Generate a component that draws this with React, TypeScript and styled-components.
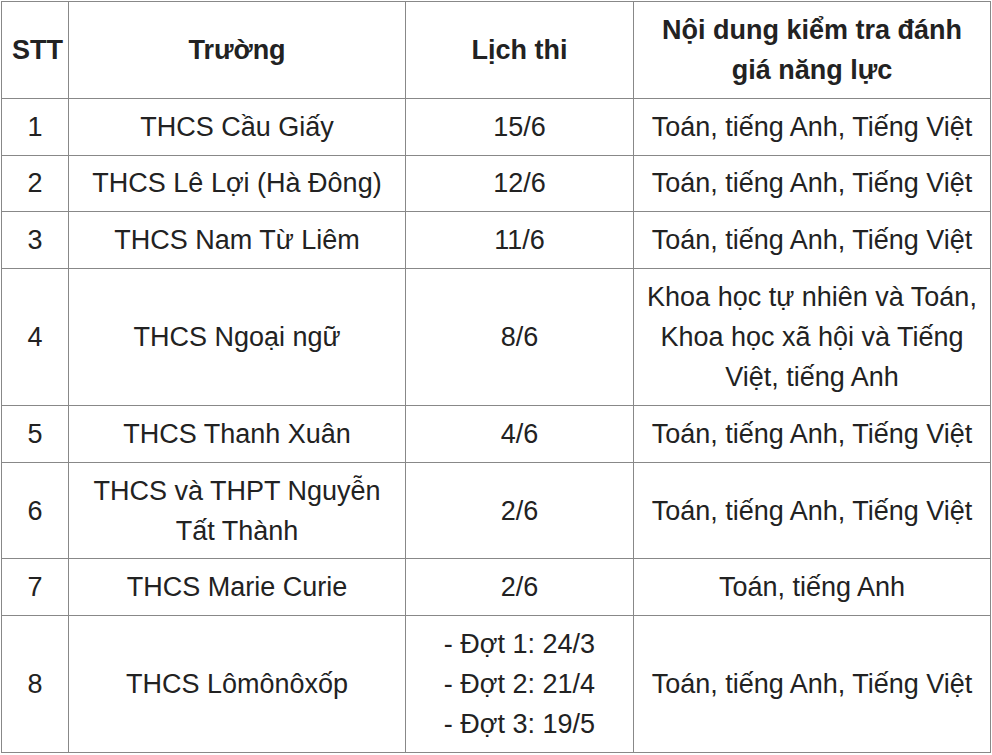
import React from "react";
import styled, { createGlobalStyle } from "styled-components";

type Row = {
  stt: string;
  school: string;
  dates: string[];
  content: string;
};

const rows: Row[] = [
  { stt: "1", school: "THCS Cầu Giấy", dates: ["15/6"], content: "Toán, tiếng Anh, Tiếng Việt" },
  { stt: "2", school: "THCS Lê Lợi (Hà Đông)", dates: ["12/6"], content: "Toán, tiếng Anh, Tiếng Việt" },
  { stt: "3", school: "THCS Nam Từ Liêm", dates: ["11/6"], content: "Toán, tiếng Anh, Tiếng Việt" },
  {
    stt: "4",
    school: "THCS Ngoại ngữ",
    dates: ["8/6"],
    content: "Khoa học tự nhiên và Toán, Khoa học xã hội và Tiếng Việt, tiếng Anh",
  },
  { stt: "5", school: "THCS Thanh Xuân", dates: ["4/6"], content: "Toán, tiếng Anh, Tiếng Việt" },
  { stt: "6", school: "THCS và THPT Nguyễn Tất Thành", dates: ["2/6"], content: "Toán, tiếng Anh, Tiếng Việt" },
  { stt: "7", school: "THCS Marie Curie", dates: ["2/6"], content: "Toán, tiếng Anh" },
  {
    stt: "8",
    school: "THCS Lômônôxốp",
    dates: ["- Đợt 1: 24/3", "- Đợt 2: 21/4", "- Đợt 3: 19/5"],
    content: "Toán, tiếng Anh, Tiếng Việt",
  },
];

const App = () => {
  return (
    <>
      <GlobalStyle />
      <Table>
        <colgroup>
          <col style={{ width: 67 }} />
          <col style={{ width: 337 }} />
          <col style={{ width: 228 }} />
          <col style={{ width: 357 }} />
        </colgroup>
        <thead>
          <tr>
            <Th>STT</Th>
            <Th>Trường</Th>
            <Th>Lịch thi</Th>
            <Th>Nội dung kiểm tra đánh giá năng lực</Th>
          </tr>
        </thead>
        <tbody>
          {rows.map((row) => (
            <tr key={row.stt}>
              <Td>{row.stt}</Td>
              <Td>{row.school}</Td>
              <Td>
                {row.dates.map((d, i) => (
                  <React.Fragment key={i}>
                    {i > 0 && <br />}
                    {d}
                  </React.Fragment>
                ))}
              </Td>
              <Td>{row.content}</Td>
            </tr>
          ))}
        </tbody>
      </Table>
    </>
  );
};

export default App;

const GlobalStyle = createGlobalStyle`
  body {
    margin: 0;
    background: #fff;
    font-family: "Liberation Sans", Arial, sans-serif;
    color: #222;
  }
`;

const Table = styled.table`
  border-collapse: collapse;
  table-layout: fixed;
  width: 990px;
  margin: 1px 0 0 1px;
  font-size: 27px;
  line-height: 40px;
`;

const Th = styled.th`
  border: 1px solid #888;
  padding: 7.9px 10px;
  text-align: center;
  vertical-align: middle;
  font-weight: 700;
  color: #222;
`;

const Td = styled.td`
  border: 1px solid #888;
  padding: 7.9px 10px;
  text-align: center;
  vertical-align: middle;
  color: #222;
`;
